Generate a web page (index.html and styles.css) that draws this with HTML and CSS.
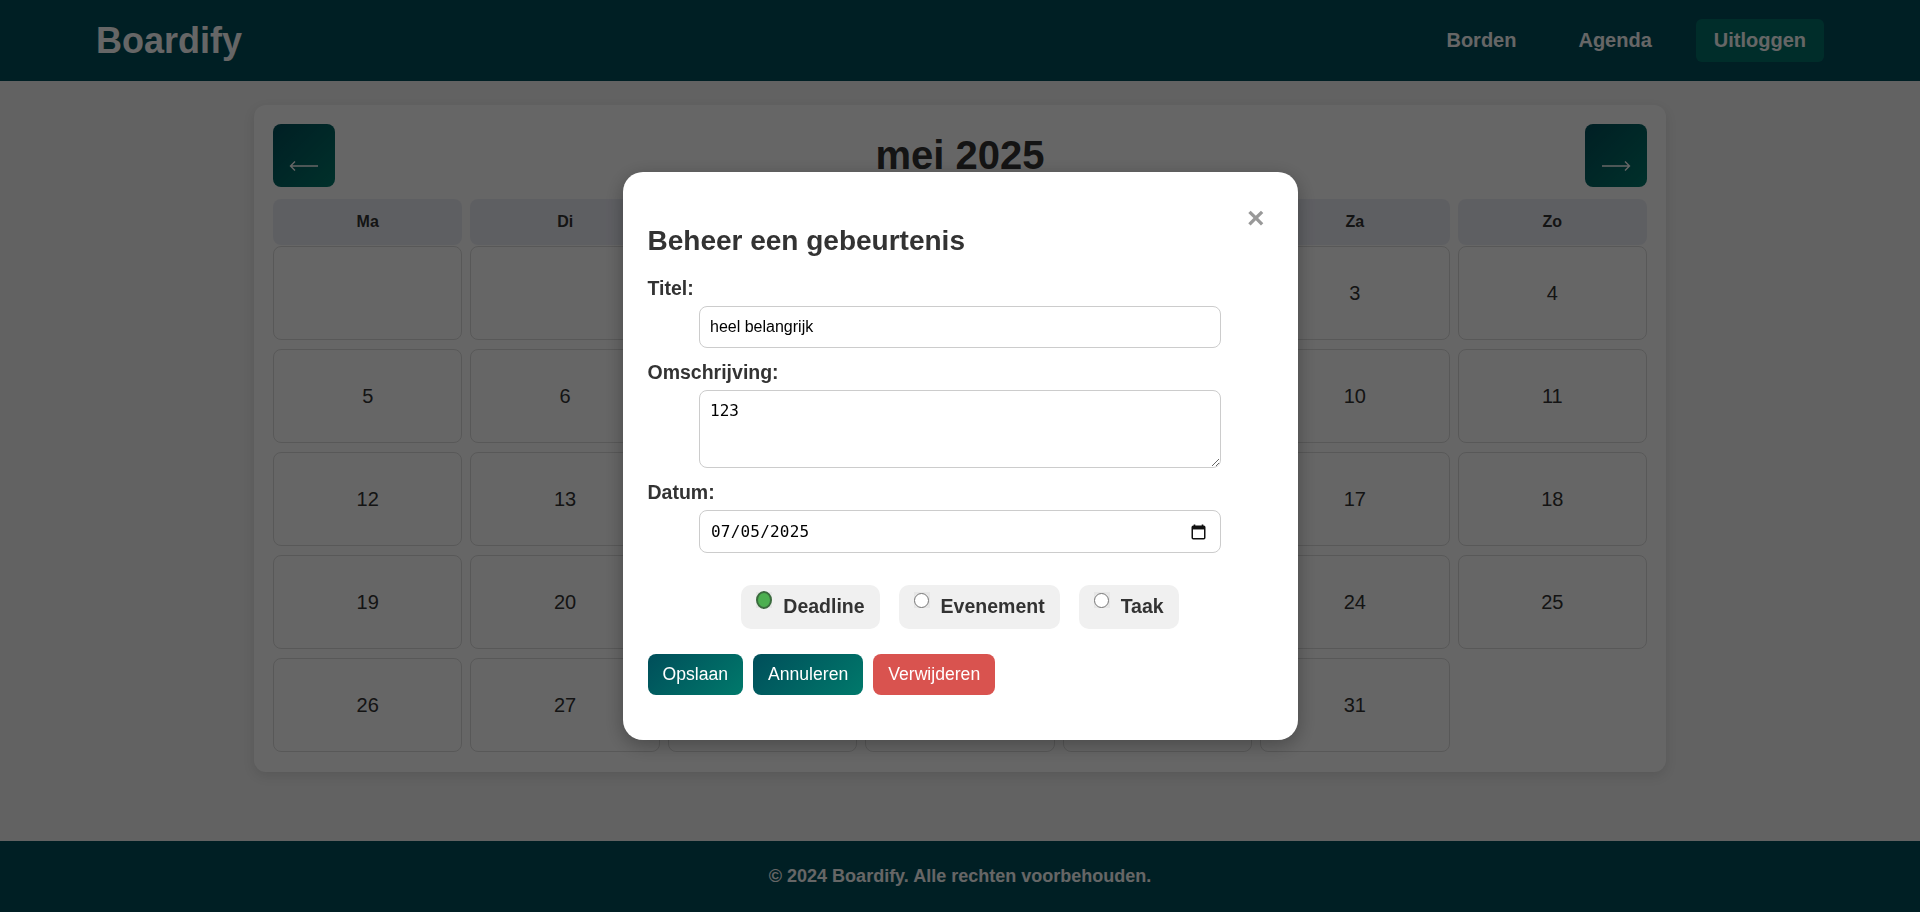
FILE: index.html
```html
<!DOCTYPE html>
<html lang="nl">
<head>
<meta charset="utf-8">
<title>Boardify - Agenda</title>
<link rel="stylesheet" href="styles.css">
</head>
<body>
<header class="site-header">
  <div class="logo">Boardify</div>
  <nav class="nav">
    <a class="nav-link" href="#">Borden</a>
    <a class="nav-link" href="#">Agenda</a>
    <a class="nav-link nav-btn" href="#">Uitloggen</a>
  </nav>
</header>

<main class="main">
  <section class="calendar">
    <div class="cal-head">
      <button class="cal-nav" aria-label="Vorige maand">
        <svg width="30" height="12" viewBox="0 0 30 12"><path d="M29 6H1.5M6 1.5L1.5 6L6 10.5" fill="none" stroke="#fff" stroke-width="1.4"/></svg>
      </button>
      <h2 class="cal-title">mei 2025</h2>
      <button class="cal-nav" aria-label="Volgende maand">
        <svg width="30" height="12" viewBox="0 0 30 12"><path d="M1 6H28.5M24 1.5L28.5 6L24 10.5" fill="none" stroke="#fff" stroke-width="1.4"/></svg>
      </button>
    </div>
    <div class="weekdays">
      <div class="weekday">Ma</div><div class="weekday">Di</div><div class="weekday">Wo</div><div class="weekday">Do</div><div class="weekday">Vr</div><div class="weekday">Za</div><div class="weekday">Zo</div>
    </div>
    <div class="days">
      <div class="day"></div><div class="day"></div><div class="day"></div>
      <div class="day">1</div><div class="day">2</div><div class="day">3</div><div class="day">4</div>
      <div class="day">5</div><div class="day">6</div><div class="day">7</div><div class="day">8</div><div class="day">9</div><div class="day">10</div><div class="day">11</div>
      <div class="day">12</div><div class="day">13</div><div class="day">14</div><div class="day">15</div><div class="day">16</div><div class="day">17</div><div class="day">18</div>
      <div class="day">19</div><div class="day">20</div><div class="day">21</div><div class="day">22</div><div class="day">23</div><div class="day">24</div><div class="day">25</div>
      <div class="day">26</div><div class="day">27</div><div class="day">28</div><div class="day">29</div><div class="day">30</div><div class="day">31</div>
    </div>
  </section>
</main>

<footer class="site-footer">© 2024 Boardify. Alle rechten voorbehouden.</footer>

<div class="overlay">
  <div class="modal">
    <button class="close" aria-label="Sluiten">×</button>
    <h2 class="modal-title">Beheer een gebeurtenis</h2>
    <label class="form-label" for="titel">Titel:</label>
    <input class="field text-input" id="titel" type="text" value="heel belangrijk">
    <label class="form-label" for="oms">Omschrijving:</label>
    <textarea class="field textarea" id="oms">123</textarea>
    <label class="form-label">Datum:</label>
    <div class="field date-field">
      <span class="date-text">07/05/2025</span>
      <svg class="cal-icon" width="15" height="16" viewBox="0 0 15 16"><path d="M3.5 0.5v2.5M11.5 0.5v2.5" stroke="#111" stroke-width="1.6"/><rect x="1.25" y="2.25" width="12.5" height="12.5" rx="1" fill="none" stroke="#111" stroke-width="1.5"/><rect x="1.25" y="2.25" width="12.5" height="3.2" fill="#111"/></svg>
    </div>
    <div class="radio-group">
      <div class="radio-pill"><span class="radio checked"></span><span class="radio-text">Deadline</span></div>
      <div class="radio-pill"><span class="radio"></span><span class="radio-text">Evenement</span></div>
      <div class="radio-pill"><span class="radio"></span><span class="radio-text">Taak</span></div>
    </div>
    <div class="actions">
      <button class="btn">Opslaan</button>
      <button class="btn">Annuleren</button>
      <button class="btn btn-danger">Verwijderen</button>
    </div>
  </div>
</div>
</body>
</html>
```

FILE: styles.css
```css
* { box-sizing: border-box; }

html, body { height: 100%; }

body {
  margin: 0;
  font-family: "Liberation Sans", Arial, sans-serif;
  background: #f4f4f4;
  color: #333;
  min-height: 100vh;
  display: flex;
  flex-direction: column;
}

/* Header */
.site-header {
  height: 81px;
  flex: none;
  background: #004e5a;
  display: flex;
  align-items: center;
  justify-content: space-between;
  padding: 0 96px;
}

.logo {
  color: #fff;
  font-size: 36px;
  font-weight: bold;
}

.nav {
  display: flex;
  align-items: center;
  gap: 26px;
}

.nav-link {
  color: #fff;
  font-size: 20px;
  font-weight: bold;
  line-height: 23px;
  text-decoration: none;
  padding: 10px 18px;
  border-radius: 6px;
}

.nav-btn { background: #00726a; }

/* Main / calendar */
.main {
  flex: 1;
  padding-top: 24px;
}

.calendar {
  width: 1412px;
  margin: 0 auto;
  background: #fff;
  border-radius: 12px;
  padding: 19px 19px 20px;
  box-shadow: 0 4px 12px rgba(0, 0, 0, 0.1);
}

.cal-head {
  display: flex;
  align-items: center;
  justify-content: space-between;
  margin-bottom: 12px;
}

.cal-nav {
  width: 62px;
  height: 63px;
  border: 0;
  border-radius: 8px;
  background: linear-gradient(135deg, #004e5a, #00796b);
  display: flex;
  align-items: center;
  justify-content: center;
  padding: 20px 0 0;
  cursor: pointer;
}

.cal-title {
  margin: 0;
  font-size: 40px;
  font-weight: bold;
  color: #333;
}

.weekdays {
  display: grid;
  grid-template-columns: repeat(7, 1fr);
  column-gap: 8px;
  margin-bottom: 1px;
}

.weekday {
  background: #eceef6;
  border-radius: 8px;
  text-align: center;
  font-size: 16px;
  font-weight: bold;
  line-height: 18px;
  padding: 14px 0;
  color: #333;
}

.days {
  display: grid;
  grid-template-columns: repeat(7, 1fr);
  column-gap: 8px;
  row-gap: 9px;
}

.day {
  height: 94px;
  border: 1px solid #ddd;
  border-radius: 8px;
  background: #fff;
  display: flex;
  align-items: center;
  justify-content: center;
  font-size: 20px;
  color: #333;
}

/* Footer */
.site-footer {
  flex: none;
  background: #004e5a;
  color: #fff;
  text-align: center;
  font-size: 18px;
  font-weight: bold;
  line-height: 21px;
  padding: 25px 0;
}

/* Modal */
.overlay {
  position: fixed;
  inset: 0;
  background: rgba(0, 0, 0, 0.6);
  display: flex;
  align-items: center;
  justify-content: center;
}

.modal {
  position: relative;
  width: 675px;
  background: #fff;
  border-radius: 20px;
  padding: 25px 25px 45px;
  box-shadow: 0 5px 20px rgba(0, 0, 0, 0.3);
}

.close {
  position: absolute;
  top: 31px;
  right: 33px;
  border: 0;
  background: none;
  padding: 0;
  font-family: "Liberation Sans", Arial, sans-serif;
  font-size: 30px;
  line-height: 30px;
  font-weight: bold;
  color: #999;
  cursor: pointer;
}

.modal-title {
  margin: 28px 0 20px;
  font-size: 28px;
  line-height: 32px;
  font-weight: bold;
  color: #333;
}

.form-label {
  display: block;
  font-size: 19.5px;
  line-height: 22px;
  font-weight: bold;
  color: #333;
  margin-bottom: 7px;
}

.field {
  display: block;
  width: calc(80% + 22px);
  margin: 0 auto 13px;
  border: 1px solid #ccc;
  border-radius: 8px;
  padding: 10px;
  font-size: 16px;
  background: #fff;
  color: #000;
}

.text-input {
  font-family: "Liberation Sans", Arial, sans-serif;
  line-height: 20px;
  height: 42px;
  outline: none;
}

.textarea {
  font-family: "DejaVu Sans Mono", monospace;
  height: 78px;
  resize: both;
  outline: none;
}

.date-field {
  height: 43px;
  margin-bottom: 0;
  display: flex;
  align-items: center;
  justify-content: space-between;
  padding: 0 14px 0 11px;
  font-family: "DejaVu Sans Mono", monospace;
}

.date-text { letter-spacing: 0.2px; }

.cal-icon { display: block; }

.radio-group {
  display: flex;
  justify-content: center;
  gap: 19px;
  margin: 32px 0 25px;
}

.radio-pill {
  display: flex;
  align-items: flex-start;
  gap: 11px;
  background: #f0f0f0;
  border-radius: 10px;
  padding: 7px 15px 12px;
  font-size: 19.5px;
  font-weight: bold;
  color: #333;
}

.radio-text {
  padding-top: 3px;
  line-height: 22px;
}

.radio {
  width: 16px;
  height: 16px;
  flex: none;
  background: #e6e6e6;
  display: flex;
  align-items: center;
  justify-content: center;
}

.radio::before {
  content: "";
  width: 13px;
  height: 13px;
  border-radius: 50%;
  border: 1px solid #767676;
  background: #fff;
}

.radio.checked::before {
  width: 14px;
  height: 14px;
  border: 2px solid #3b6b3e;
  background: #4caf50;
}

.actions {
  display: flex;
  gap: 10px;
}

.btn {
  border: 0;
  border-radius: 8px;
  color: #fff;
  font-family: "Liberation Sans", Arial, sans-serif;
  font-size: 17.6px;
  line-height: 21px;
  padding: 10px 15px;
  background: linear-gradient(135deg, #004e5a, #00796b);
  cursor: pointer;
}

.btn-danger { background: #d9534f; }
```
